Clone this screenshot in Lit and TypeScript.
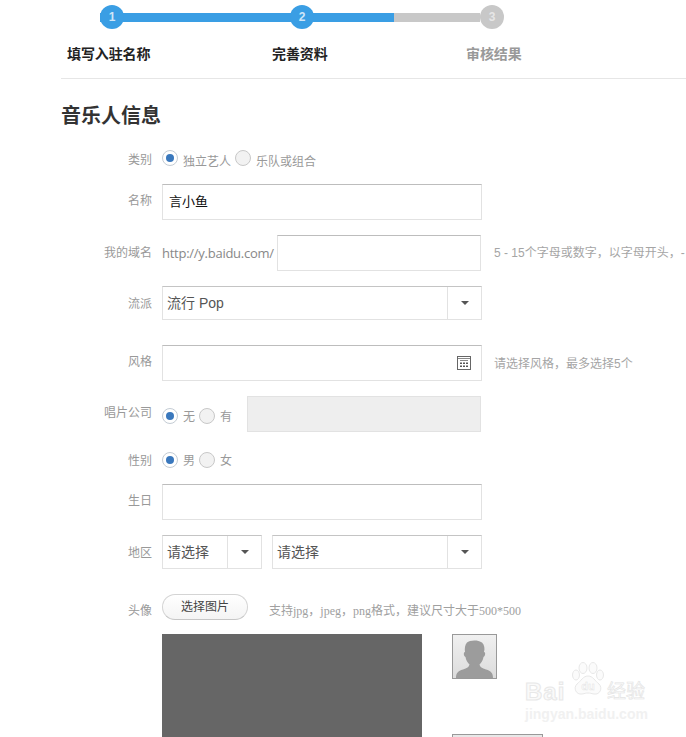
import { LitElement, html, css, svg } from "lit";
import { customElement } from "lit/decorators.js";

const caret = html`<span class="arrow"><i></i></span>`;

@customElement("app-root")
export class AppRoot extends LitElement {
  static styles = css`
    :host {
      display: block;
      width: 686px;
      height: 737px;
      overflow: hidden;
      position: relative;
      background: #fff;
      font-family: "Liberation Sans", "Noto Sans CJK SC", sans-serif;
      font-size: 12px;
      color: #999;
      white-space: nowrap;
    }
    .steps {
      margin-left: 61px;
      height: 78px;
      border-bottom: 1px solid #e6e6e6;
      display: flex;
      flex-direction: column;
    }
    .track {
      margin: 5px 0 0 39px;
      display: flex;
      align-items: center;
      width: 404px;
      height: 24px;
      position: relative;
    }
    .bar { height: 9px; }
    .b1 { width: 294px; background: #3a9ee4; }
    .b2 { width: 86px; background: #c8c8c8; }
    .dot {
      position: absolute;
      top: 0;
      width: 24px;
      height: 24px;
      border-radius: 50%;
      background: #3a9ee4;
      color: #cfe6f8;
      font-size: 12px;
      font-weight: bold;
      display: flex;
      align-items: center;
      justify-content: center;
    }
    .d1 { left: 0; }
    .d2 { left: 190px; }
    .d3 { left: 380px; background: #c8c8c8; color: #e6e6e6; }
    .step-labels {
      margin-top: 15px;
      height: 20px;
      display: flex;
      font-size: 14px;
      font-weight: bold;
      line-height: 20px;
      color: #222;
    }
    .s1 { margin-left: 6px; width: 205px; letter-spacing: -0.1px; }
    .s2 { width: 194px; letter-spacing: -0.1px; }
    .s3 { color: #999; letter-spacing: -0.1px; }
    h1 {
      margin: 22px 0 0 61px;
      height: 30px;
      font-size: 20px;
      line-height: 30px;
      font-weight: bold;
      color: #333;
    }
    form { display: block; margin: 0 0 0 61px; }
    .row { display: flex; align-items: center; }
    .label {
      width: 91px;
      margin-right: 10px;
      text-align: right;
      flex: none;
      line-height: 16px;
    }
    .up { padding-bottom: 2px; }
    .down { padding-top: 2px; }
    .r-kind { margin-top: 16px; height: 26px; }
    .r-name { margin-top: 11px; }
    .r-domain { margin-top: 15px; }
    .r-genre { margin-top: 15px; }
    .r-style { margin-top: 25px; }
    .r-label { margin-top: 15px; }
    .r-sex { margin-top: 16px; height: 24px; }
    .r-bday { margin-top: 12px; }
    .r-area { margin-top: 15px; }
    .r-pic { margin-top: 25px; height: 26px; align-items: flex-start; }
    .r-prev { margin: 14px 0 0 101px; align-items: flex-start; }
    .input {
      box-sizing: border-box;
      width: 320px;
      height: 36px;
      border: 1px solid #e2e2e2;
      border-top-color: #bdbdbd;
      background: #fff;
      display: flex;
      align-items: center;
      justify-content: space-between;
      padding: 0 10px 0 6px;
      font-size: 13px;
      color: #111;
    }
    .val { padding-bottom: 4px; }
    .cal { display: flex; }
    .short { width: 204px; margin-left: 4px; }
    .domain {
      font-family: "Open Sans", "Liberation Sans", sans-serif;
      font-size: 13px;
      letter-spacing: -0.26px;
      color: #888;
      width: 111px;
    }
    .hint { margin-left: 12px; color: #a5a5a5; padding-bottom: 2px; }
    .hint-d { margin-left: 13px; padding-bottom: 4px; }
    .select {
      box-sizing: border-box;
      width: 320px;
      height: 34px;
      border: 1px solid #e2e2e2;
      border-top-color: #c4c4c4;
      display: flex;
      align-items: center;
      font-size: 14px;
      color: #555;
    }
    .select .txt { flex: 1; padding: 0 0 2px 4px; }
    .arrow {
      width: 33px;
      height: 100%;
      border-left: 1px solid #e2e2e2;
      display: flex;
      align-items: center;
      justify-content: center;
    }
    .arrow i {
      width: 0;
      height: 0;
      border-left: 4px solid transparent;
      border-right: 4px solid transparent;
      border-top: 4px solid #555;
    }
    .small { width: 100px; margin-right: 10px; }
    .mid { width: 210px; }
    .radio {
      box-sizing: border-box;
      width: 16px;
      height: 16px;
      border-radius: 50%;
      border: 1px solid #c8c8c8;
      background: #f2f2f2;
      flex: none;
      display: flex;
      align-items: center;
      justify-content: center;
    }
    .radio.on { background: #fff; border-color: #c4ccd4; }
    .radio.on::after {
      content: "";
      width: 8px;
      height: 8px;
      border-radius: 50%;
      background: #3a78bd;
    }
    .opts { display: flex; align-items: center; }
    .opts .t { margin: 0 4px 0 5px; }
    .low { padding-top: 4px; }
    .t-up { padding-bottom: 2px; }
    .k1 { margin-bottom: 4px; }
    .t-kind { width: 48px; }
    .t-one { width: 12px; }
    .disabled {
      box-sizing: border-box;
      margin-left: 11px;
      width: 234px;
      height: 36px;
      background: #eeeeee;
      border: 1px solid #e2e2e2;
    }
    .btn {
      box-sizing: border-box;
      width: 86px;
      height: 26px;
      border: 1px solid #d4d4d4;
      border-bottom-color: #c6c6c6;
      border-radius: 13px;
      background: linear-gradient(#fff, #f4f4f4);
      color: #444;
      font-size: 12px;
      line-height: 24px;
      text-align: center;
    }
    .pic-label { margin-top: 9px; }
    .pic-hint {
      margin: 7px 0 0 21px;
      font-family: "Liberation Serif", "Noto Sans CJK SC", serif;
      color: #a0a0a0;
      font-size: 12px;
    }
    .preview { width: 260px; height: 140px; background: #666; flex: none; }
    .side {
      margin-left: 30px;
      display: flex;
      flex-direction: column;
    }
    .avatar {
      display: block;
      box-sizing: border-box;
      width: 45px;
      height: 45px;
      border: 1px solid #999;
    }
    .thumb {
      margin-top: 55px;
      box-sizing: border-box;
      width: 91px;
      height: 40px;
      border: 1px solid #999;
      background: #e8e8e8;
    }
    .wm {
      position: absolute;
      left: 525px;
      top: 662px;
      width: 124px;
      height: 60px;
      pointer-events: none;
    }
    .wm .brand {
      position: absolute;
      top: 17px;
      left: 0;
      font-size: 24px;
      line-height: 26px;
      font-weight: bold;
      letter-spacing: 1px;
      color: #fafafa;
      -webkit-text-stroke: 1px #e8e8e8;
    }
    .wm .jy {
      position: absolute;
      top: 19px;
      left: 82px;
      font-size: 19px;
      line-height: 22px;
      color: #fafafa;
      -webkit-text-stroke: 0.6px #e4e4e4;
    }
    .wm .url {
      position: absolute;
      top: 43px;
      left: 0;
      font-size: 14px;
      line-height: 18px;
      font-weight: bold;
      color: #f1f1f1;
    }
    .wm svg { position: absolute; left: 46px; top: 0; }
  `;

  private calendar() {
    return svg`<svg width="14" height="14" viewBox="0 0 14 14">
      <rect x=".5" y=".5" width="13" height="13" fill="#fff" stroke="#666"/>
      <path d="M1 2.500h12M3 4.500h8" stroke="#888"/>
      <path d="M3 6.500h2V8H3zM6 6.500h2V8H6zM9 6.500h2V8H9zM3 9.500h2V11H3zM6 9.500h2V11H6zM9 9.500h2V11H9z" fill="#555"/>
    </svg>`;
  }

  private person() {
    return html`<svg class="avatar" viewBox="0 0 43 43">
      <defs><linearGradient id="av" x1="0" y1="0" x2="0" y2="1">
        <stop offset="0" stop-color="#f0f0f0"/><stop offset="1" stop-color="#dcdcdc"/>
      </linearGradient></defs>
      <rect width="43" height="43" fill="url(#av)"/>
      <path d="M3 43c0-5 2-7 7-8.500 4-1.200 6-2.500 6.500-5-2-1.500-3.500-4.500-4-7.500-1.500-.5-2-2.500-1.500-4.500l1-.5c-.5-3.500-.2-7 2-9.500 2.500-2.500 11-3 15 0 2.500 2.500 3 6 2 9.500l1 .5c.5 2-.2 4-1.500 4.500-.5 3-2 6-4 7.500.5 2.500 2.500 3.800 6.500 5 5 1.500 7 3.500 7 8.500z" fill="#9c9c9c"/>
    </svg>`;
  }

  private paw() {
    return html`<svg width="34" height="36" viewBox="0 0 34 36" fill="#fbfbfb" stroke="#e8e8e8" stroke-width="1">
      <ellipse cx="5" cy="13" rx="3.500" ry="5"/>
      <ellipse cx="12" cy="6" rx="4" ry="5.500"/>
      <ellipse cx="22" cy="6" rx="4" ry="5.500"/>
      <ellipse cx="29" cy="13" rx="3.500" ry="5"/>
      <path d="M17 14c-5 0-7 5-11 8-4 4-1 11 5 10 3-.5 4-1 6-1s3 .5 6 1c6 1 9-6 5-10-4-3-6-8-11-8z"/>
      <text x="17" y="28" font-size="11" font-weight="bold" text-anchor="middle" stroke="#e2e2e2" stroke-width=".4">du</text>
    </svg>`;
  }

  render() {
    return html`
      <div class="steps">
        <div class="track">
          <div class="bar b1"></div>
          <div class="bar b2"></div>
          <span class="dot d1">1</span>
          <span class="dot d2">2</span>
          <span class="dot d3">3</span>
        </div>
        <div class="step-labels">
          <span class="s1">填写入驻名称</span>
          <span class="s2">完善资料</span>
          <span class="s3">审核结果</span>
        </div>
      </div>
      <h1>音乐人信息</h1>
      <form>
        <div class="row r-kind">
          <span class="label">类别</span>
          <div class="opts">
            <span class="radio on k1"></span><span class="t t-kind">独立艺人</span>
            <span class="radio k1"></span><span class="t">乐队或组合</span>
          </div>
        </div>
        <div class="row r-name">
          <span class="label up">名称</span>
          <div class="input"><span class="val">言小鱼</span></div>
        </div>
        <div class="row r-domain">
          <span class="label">我的域名</span>
          <span class="domain">http://y.baidu.com/</span>
          <div class="input short"></div>
          <span class="hint hint-d">5 - 15个字母或数字，以字母开头，-</span>
        </div>
        <div class="row r-genre">
          <span class="label down">流派</span>
          <div class="select"><span class="txt">流行 Pop</span>${caret}</div>
        </div>
        <div class="row r-style">
          <span class="label up">风格</span>
          <div class="input">
            <span></span>
            <span class="cal">${this.calendar()}</span>
          </div>
          <span class="hint">请选择风格，最多选择5个</span>
        </div>
        <div class="row r-label">
          <span class="label up">唱片公司</span>
          <div class="opts low">
            <span class="radio on"></span><span class="t t-one t-up">无</span>
            <span class="radio"></span><span class="t t-one t-up">有</span>
          </div>
          <div class="disabled"></div>
        </div>
        <div class="row r-sex">
          <span class="label down">性别</span>
          <div class="opts">
            <span class="radio on"></span><span class="t t-one t-up">男</span>
            <span class="radio"></span><span class="t t-one t-up">女</span>
          </div>
        </div>
        <div class="row r-bday">
          <span class="label up">生日</span>
          <div class="input"></div>
        </div>
        <div class="row r-area">
          <span class="label down">地区</span>
          <div class="select small"><span class="txt">请选择</span>${caret}</div>
          <div class="select mid"><span class="txt">请选择</span>${caret}</div>
        </div>
        <div class="row r-pic">
          <span class="label pic-label">头像</span>
          <div class="btn">选择图片</div>
          <span class="pic-hint">支持jpg，jpeg，png格式，建议尺寸大于500*500</span>
        </div>
        <div class="row r-prev">
          <div class="preview"></div>
          <div class="side">
            ${this.person()}
            <div class="thumb"></div>
          </div>
        </div>
      </form>
      <div class="wm">
        <span class="brand">Bai</span>
        ${this.paw()}
        <span class="jy">经验</span>
        <span class="url">jingyan.baidu.com</span>
      </div>
    `;
  }
}
